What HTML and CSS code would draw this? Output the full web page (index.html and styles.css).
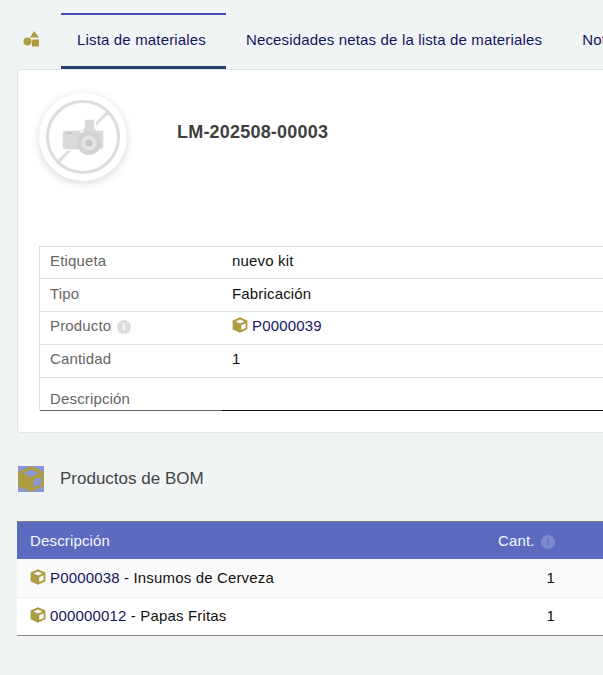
FILE: index.html
```html
<!DOCTYPE html>
<html lang="es">
<head>
<meta charset="utf-8">
<title>Lista de materiales</title>
<link rel="stylesheet" href="styles.css">
</head>
<body>
<svg class="defs" width="0" height="0" aria-hidden="true">
  <symbol id="box" viewBox="0 0 16 16">
    <path fill="#ae9c42" fill-rule="evenodd" d="M8 0.3 15.4 3.6 15.4 12.2 8 15.7 0.6 12.2 0.6 3.6ZM8 2.5 3.6 4.5 8 6.5 12.4 4.5ZM13.6 6.2 9.3 8.2 9.3 12.9 13.6 10.9Z"/>
  </symbol>
</svg>
<nav class="tabs">
  <svg class="tabs-logo" width="18" height="16" viewBox="0 0 18 16"><path fill="#ae9c42" d="M11 0 16 6.500H7ZM9 8.500H16V15.500H9Z"/><circle cx="4.500" cy="10.500" r="4" fill="#ae9c42"/></svg>
  <a class="tab tab-active">Lista de materiales</a>
  <a class="tab tab-wide">Necesidades netas de la lista de materiales</a>
  <a class="tab tab-wide">Notas</a>
</nav>
<main class="content">
  <section class="card">
    <div class="head">
      <div class="avatar">
        <svg width="88" height="88" viewBox="0 0 88 88">
          <circle cx="44" cy="44" r="35.500" fill="none" stroke="#dcdcdc" stroke-width="3"/>
          <path d="M19 69 69 19" stroke="#dcdcdc" stroke-width="3"/>
          <g class="camera">
            <path fill="#d9d9d9" stroke="#fff" stroke-width="1.500" d="M25 37H43L45 34V26H56V35L58 37H65V55L62 57H59A11.500 11.500 0 0 1 41 57H26L23 55V39Z"/>
            <rect x="41" y="37" width="4" height="3" fill="#f2f2f2"/>
            <rect x="27" y="39" width="6" height="2" fill="#c9c9c9"/>
            <circle cx="50" cy="50" r="12" fill="#d2d2d2"/>
            <circle cx="50" cy="50" r="7.500" fill="#e4e4e4"/>
            <circle cx="50" cy="50" r="3.500" fill="#c6c6c6"/>
          </g>
        </svg>
      </div>
      <h1 class="title">LM-202508-00003</h1>
    </div>
    <div class="fields">
      <div class="row row-first"><div class="label">Etiqueta</div><div class="value">nuevo kit</div></div>
      <div class="row row-low"><div class="label">Tipo</div><div class="value">Fabricación</div></div>
      <div class="row"><div class="label">Producto <span class="info">i</span></div><div class="value"><svg class="box"><use href="#box"/></svg><a class="link">P0000039</a></div></div>
      <div class="row"><div class="label">Cantidad</div><div class="value">1</div></div>
      <div class="row row-desc"><div class="label">Descripción</div><div class="value"></div></div>
    </div>
  </section>
  <h2 class="section-title"><svg class="section-icon" viewBox="0 0 26 26"><rect width="26" height="26" fill="#8d97d6"/><path fill="#ae9c42" fill-rule="evenodd" d="M13 0 26 6V20L13 26 0 20V6ZM13 3.500 5 7.300 13 11 21 7.300ZM23 10.500 15.500 14V21.500L23 18Z"/></svg>Productos de BOM</h2>
  <div class="grid">
    <div class="grid-row grid-head"><div>Descripción</div><div class="qty">Cant. <span class="info info-head">i</span></div></div>
    <div class="grid-row grid-odd"><div><svg class="box"><use href="#box"/></svg><a class="link">P0000038</a> - Insumos de Cerveza</div><div class="qty qty-num">1</div></div>
    <div class="grid-row"><div><svg class="box"><use href="#box"/></svg><a class="link">000000012</a> - Papas Fritas</div><div class="qty qty-num">1</div></div>
  </div>
</main>
</body>
</html>
```
FILE: styles.css
```css
html, body { margin: 0; height: 100%; overflow: hidden; }
body { background: #f0f4f5; font-family: "Liberation Sans", Arial, sans-serif; font-size: 15px; letter-spacing: .16px; color: #111; width: 603px; }
.defs { display: block; height: 0; }
.tabs { display: flex; align-items: stretch; height: 56px; padding: 13px 0 0 23px; white-space: nowrap; width: 760px; }
.tabs-logo { align-self: center; margin: 0 20px 4px 0; }
.tab { display: flex; align-items: center; padding: 0 20px 2px 16px; color: #14145f; border-top: 2px solid transparent; border-bottom: 3px solid transparent; }
.tab-wide { padding-left: 20px; }
.tab-active { border-top-color: #3f51b5; border-bottom-color: #283d63; }
.content { margin-left: 17px; width: 640px; }
.card { background: #fff; border: 1px solid #e3e6e8; border-right: 0; border-radius: 4px 0 0 4px; height: 364px; box-sizing: border-box; padding: 23px 0 0 21px; }
.head { display: flex; height: 153px; }
.avatar { width: 88px; height: 88px; border-radius: 50%; background: #fff; box-shadow: 0 2px 8px rgba(0,0,0,.16); }
.avatar svg { display: block; }
.camera { filter: blur(.4px); }
.title { margin: 29px 0 0 50px; font-size: 18px; letter-spacing: .2px; line-height: 21px; font-weight: 700; color: #3f3f3f; }
.fields { border-left: 1px solid #dfdfdf; border-top: 1px solid #dfdfdf; }
.row { display: grid; grid-template-columns: 182px 1fr; height: 32px; line-height: 28px; border-bottom: 1px solid #dfdfdf; padding-left: 10px; }
.row-first { height: 31px; }
.row-low { line-height: 30px; }
.label { color: #666; }
.row-desc { border-bottom: 0; height: 33px; line-height: 23px; padding-left: 0; }
.row-desc .label { padding: 9px 0 0 10px; border-bottom: 1px solid #666; }
.row-desc .value { border-bottom: 1px solid #111; padding-left: 10px; }
.info { display: inline-block; width: 14px; height: 14px; margin-left: 1px; border-radius: 50%; background: #dcdcdc; color: #fff; font: 700 10px/14px "Liberation Serif", serif; text-align: center; vertical-align: 1px; }
.box { width: 16px; height: 16px; margin-right: 4px; vertical-align: -2px; }
.link { color: #14145f; }
.section-title { display: flex; align-items: center; margin: 33px 0 0 1px; height: 26px; font-size: 17px; letter-spacing: 0; font-weight: 400; color: #444; }
.section-icon { width: 26px; height: 26px; margin-right: 16px; }
.grid { margin-top: 29px; }
.grid-row { display: grid; grid-template-columns: 468px 1fr; align-items: center; height: 35px; padding: 0 0 2px 13px; background: #fff; border-bottom: 1px solid #ededed; }
.grid-head { height: 37px; padding-bottom: 0; background: #5c6bc0; color: #f5f6ff; border-top: 1px solid #808080; border-bottom: 0; }
.grid-odd { height: 36px; background: #fafafa; }
.grid-row:last-child { border-bottom-color: #8a8a8a; }
.qty { width: 70px; white-space: nowrap; }
.qty-num { width: 57px; text-align: right; }
.info-head { margin-left: 2px; background: #7e8ad0; color: #5c6bc0; }
```
